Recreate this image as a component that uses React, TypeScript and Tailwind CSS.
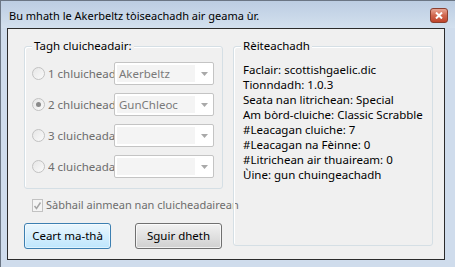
const font = { fontFamily: '"Noto Sans", "Open Sans", sans-serif' };

const players = [
  { label: "1 chluicheadair", value: "Akerbeltz", checked: false },
  { label: "2 chluicheadair", value: "GunChleoc", checked: true },
  { label: "3 cluicheadairean", value: "", checked: false },
  { label: "4 cluicheadairean", value: "", checked: false },
];

const settings = [
  "Faclair: scottishgaelic.dic",
  "Tionndadh: 1.0.3",
  "Seata nan litrichean: Special",
  "Am bòrd-cluiche: Classic Scrabble",
  "#Leacagan cluiche: 7",
  "#Leacagan na Fèinne: 0",
  "#Litrichean air thuaiream: 0",
  "Ùine: gun chuingeachadh",
];

function Radio({ checked }: { checked: boolean }) {
  return (
    <div className="w-[13px] h-[13px] shrink-0 rounded-full border border-[#c2c2c2] bg-gradient-to-br from-[#e6e6e6] to-[#fafafa] flex items-center justify-center">
      {checked && <div className="w-[5px] h-[5px] rounded-full bg-[#8a8a8a]" />}
    </div>
  );
}

function Combo({ value }: { value: string }) {
  return (
    <div className="w-[100px] h-[23px] shrink-0 border border-[#c4c4c4] rounded-[2px] bg-white flex items-center">
      <div className="ml-[2px] w-[78px] h-[17px] bg-[#f4f4f4] text-[#7a7a7a] leading-[17px] pl-[2px] overflow-hidden whitespace-nowrap">
        {value}
      </div>
      <div className="flex-1 flex items-center justify-center">
        <svg width="7" height="4" viewBox="0 0 7 4">
          <path d="M0 0h7L3.5 4z" fill="#a9a9a9" />
        </svg>
      </div>
    </div>
  );
}

function GroupBox({
  title,
  className,
  children,
}: {
  title: string;
  className: string;
  children: React.ReactNode;
}) {
  return (
    <div className={`relative border border-[#d5dfe5] rounded-[3px] shadow-[inset_1px_1px_0_#ffffff] ${className}`}>
      <div className="absolute left-[7px] top-[-9px] px-[2px] bg-[#f0f0f0] text-black leading-[16px]">
        {title}
      </div>
      {children}
    </div>
  );
}

export default function App() {
  return (
    <div
      className="w-[455px] h-[267px] bg-[#cfdcec] border-l border-t border-[#6b7684] text-[11px] flex flex-col"
      style={font}
    >
      {/* title bar */}
      <div className="h-[27px] flex items-center justify-between pl-[8px] pr-[7px] bg-gradient-to-b from-[#bccde2] to-[#d3e0ee]">
        <span className="text-black text-[11px] pt-[4px]">
          Bu mhath le Akerbeltz tòiseachadh air geama ùr.
        </span>
        <div className="w-[18px] h-[15px] rounded-[3px] border border-[#8a3f2f] bg-gradient-to-b from-[#e7a695] via-[#d0664d] to-[#c0442b] flex items-center justify-center mt-[2px]">
          <svg width="8" height="7" viewBox="0 0 8 7">
            <path d="M1 0.5l6 6M7 0.5l-6 6" stroke="#ffffff" strokeWidth="2" />
          </svg>
        </div>
      </div>

      {/* client area */}
      <div className="ml-[6px] w-[438px] h-[232px] border border-[#2b2b2b] bg-[#f0f0f0] flex pl-[16px] pt-[17px]">
        <div className="w-[199px] flex flex-col">
          <GroupBox title="Tagh cluicheadair:" className="h-[143px] pt-[15px] flex flex-col gap-[8px] text-[11.5px]">
            {players.map((p) => (
              <div key={p.label} className="flex items-center pl-[7px]">
                <Radio checked={p.checked} />
                <div className="w-[66px] ml-[3px] overflow-hidden whitespace-nowrap text-[#6d6d6d]">
                  {p.label}
                </div>
                <Combo value={p.value} />
              </div>
            ))}
          </GroupBox>

          <div className="flex items-center mt-[8px] pl-[8px]">
            <div className="w-[13px] h-[13px] border border-[#c2c2c2] bg-[#f4f4f4] flex items-center justify-center">
              <svg width="9" height="9" viewBox="0 0 9 9">
                <path d="M1.5 5l2 2.5L7.5 1.5" stroke="#a5a5a5" strokeWidth="1.5" fill="none" />
              </svg>
            </div>
            <span className="ml-[3px] text-[#6d6d6d] whitespace-nowrap">
              Sàbhail ainmean nan cluicheadairean
            </span>
          </div>

          <div className="flex gap-[24px] mt-[9px] text-[11.5px]">
            <button className="w-[87px] h-[26px] rounded-[3px] border border-[#3c7fb1] bg-gradient-to-b from-[#eaf6fd] to-[#bee6fd] shadow-[inset_0_0_0_1px_#ffffff80] text-black">
              Ceart ma-thà
            </button>
            <button className="w-[87px] h-[26px] rounded-[3px] border border-[#707070] bg-gradient-to-b from-[#f2f2f2] to-[#d0d0d0] shadow-[inset_0_0_0_1px_#ffffffb0] text-black">
              Sguir dheth
            </button>
          </div>
        </div>

        <GroupBox title="Rèiteachadh" className="ml-[10px] w-[200px] h-[200px] pt-[15px] pl-[9px] text-[11.5px]">
          {settings.map((s) => (
            <div key={s} className="leading-[15px] text-black whitespace-nowrap">
              {s}
            </div>
          ))}
        </GroupBox>
      </div>
    </div>
  );
}
